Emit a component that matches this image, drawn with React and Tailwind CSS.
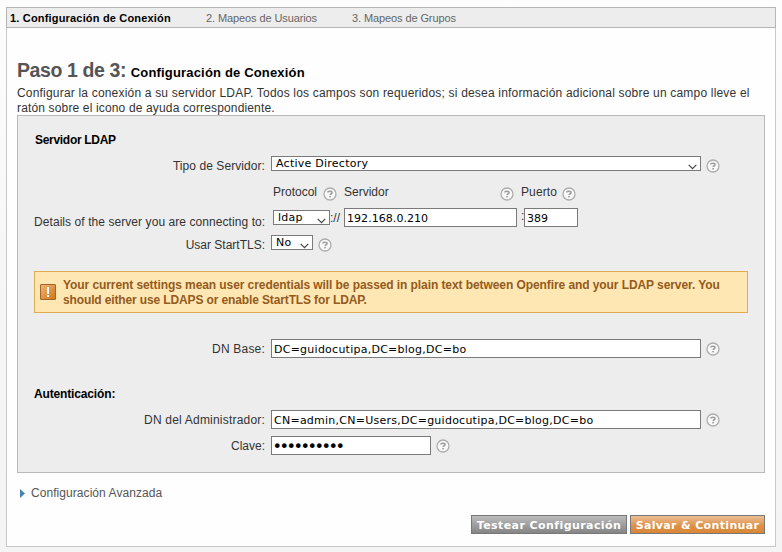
import { useState } from 'react';

const HelpIcon = ({ className = '' }) => (
  <svg className={`block size-[14px] shrink-0 ${className}`} viewBox="0 0 14 14" fill="none">
    <circle cx="7" cy="7" r="6" fill="#f8f8f8" stroke="#adadad" strokeWidth="1.3" />
    <path d="M4.8 5.6C4.8 3.7 9.1 3.7 9.1 5.6C9.1 6.8 7.1 6.7 7.1 8.1" stroke="#9c9c9c" strokeWidth="1.5" />
    <rect x="6.2" y="9" width="1.7" height="1.4" fill="#9c9c9c" />
  </svg>
);

const Label = ({ children, className = '' }) => (
  <label className={`w-[231px] shrink-0 whitespace-nowrap text-right ${className}`}>{children}</label>
);

const TextInput = ({ className = '', ...props }) => (
  <input
    className={`block h-[19px] shrink-0 border border-[#7a7a7a] bg-white pt-px font-['DejaVu_Sans',sans-serif] text-black outline-none ${className}`}
    {...props}
  />
);

const Select = ({ options, className = '', ...props }) => (
  <div className={`relative h-[15px] shrink-0 ${className}`}>
    <select
      className="block h-[15px] w-full appearance-none border border-[#7a7a7a] bg-white pl-1 font-['DejaVu_Sans',sans-serif] text-[11px] leading-[14px] tracking-[0.25px] text-black outline-none"
      {...props}
    >
      {options.map((option) => (
        <option key={option}>{option}</option>
      ))}
    </select>
    <svg className="absolute top-[8px] right-1 h-[6px] w-[9px]" viewBox="0 0 9 6" fill="none">
      <path d="M0.7 0.8L4.5 4.6L8.3 0.8" stroke="#444" strokeWidth="1.2" />
    </svg>
  </div>
);

const App = () => {
  const [form, setForm] = useState({
    serverType: 'Active Directory',
    protocol: 'ldap',
    host: '192.168.0.210',
    port: '389',
    startTls: 'No',
    baseDn: 'DC=guidocutipa,DC=blog,DC=bo',
    adminDn: 'CN=admin,CN=Users,DC=guidocutipa,DC=blog,DC=bo',
    password: '0123456789',
  });

  const handleChange = (e) => {
    const { name, value } = e.target;
    setForm((prev) => ({ ...prev, [name]: value }));
  };

  return (
    <div className="h-[552px] w-[782px] overflow-hidden bg-linear-to-b from-[#fdfdfd] via-[#f5f5f5] via-60% to-[#f4f4f4] pt-[7px] pl-[6px] font-['Liberation_Sans',Arial,sans-serif] text-[12px] leading-[15px] text-[#333]">
      <div className="h-[540px] w-[770px] border border-[#c8c8c8] bg-[#fefefe]">
        {/* Wizard steps */}
        <div className="-mx-px -mt-px flex h-[21px] items-center border border-[#b5b5b5] bg-[#ededed] pt-[2px] pl-[3px] text-[11px] text-[#666]">
          <span className="w-[196px] whitespace-nowrap font-bold tracking-[0.18px] text-black">1. Configuración de Conexión</span>
          <span className="w-[146px] whitespace-nowrap tracking-[-0.1px]">2. Mapeos de Usuarios</span>
          <span className="whitespace-nowrap tracking-[-0.1px]">3. Mapeos de Grupos</span>
        </div>

        <div className="px-[10px]">
          <h1 className="mt-[28px] h-[30px] whitespace-nowrap text-[13px] leading-[28px] font-bold tracking-[0.17px] text-black">
            <span className="mr-px text-[19.5px] tracking-[-0.4px] text-[#555]">Paso 1 de 3:</span> Configuración de Conexión
          </h1>
          <p className="h-[29px] whitespace-nowrap">
            <span className="tracking-[0.19px]">
              Configurar la conexión a su servidor LDAP. Todos los campos son requeridos; si desea información adicional sobre un campo lleve el
            </span>
            <br />
            <span className="tracking-[0.15px]">ratón sobre el icono de ayuda correspondiente.</span>
          </p>

          <div className="h-[358px] w-[748px] border border-[#b9b9b9] bg-[#ededed] pl-[16px]">
            <h2 className="mt-[17px] pl-px font-bold tracking-[-0.3px] text-black">Servidor LDAP</h2>

            <div className="mt-2 flex h-[20px]">
              <Label className="pt-[3px] tracking-[0.07px]">Tipo de Servidor:</Label>
              <Select
                name="serverType"
                value={form.serverType}
                onChange={handleChange}
                options={['Active Directory', 'OpenLDAP']}
                className="ml-[6px] w-[430px]"
              />
              <HelpIcon className="mt-[3px] ml-[5px]" />
            </div>

            <div className="mt-[9px] flex h-[16px] pl-[239px]">
              <span className="w-[50px]">Protocol</span>
              <HelpIcon className="mt-[2px]" />
              <span className="ml-[7px] w-[156px]">Servidor</span>
              <HelpIcon className="mt-[2px]" />
              <span className="ml-[7px] w-[41px] tracking-[0.1px]">Puerto</span>
              <HelpIcon className="mt-[2px]" />
            </div>

            <div className="mt-[7px] flex h-[24px]">
              <Label className="pt-[7px] tracking-[0.07px]">Details of the server you are connecting to:</Label>
              <Select
                name="protocol"
                value={form.protocol}
                onChange={handleChange}
                options={['ldap', 'ldaps']}
                className="mt-[2px] ml-[8px] w-[57px]"
              />
              <span className="mt-[3px] w-[14px]">://</span>
              <TextInput
                name="host"
                value={form.host}
                onChange={handleChange}
                className="w-[173px] px-[2px] text-[11px] tracking-[0.05px]"
              />
              <span className="mt-px w-[7px] pl-1">:</span>
              <TextInput name="port" value={form.port} onChange={handleChange} className="w-[54px] px-[2px] text-[11px]" />
            </div>

            <div className="mt-[3px] flex h-[20px]">
              <Label className="pt-[3px]">Usar StartTLS:</Label>
              <Select
                name="startTls"
                value={form.startTls}
                onChange={handleChange}
                options={['No', 'Sí']}
                className="ml-[6px] w-[42px]"
              />
              <HelpIcon className="mt-[3px] ml-[5px]" />
            </div>

            <div className="mt-4 flex h-[42px] w-[714px] items-center border border-[#dfad51] bg-[#ffe7b3] pl-[5px] font-bold text-[#945a20]">
              <svg className="mr-[7px] size-4 shrink-0" viewBox="0 0 16 16">
                <defs>
                  <linearGradient id="warn" x1="0" y1="0" x2="1" y2="1">
                    <stop offset="0" stopColor="#eeb679" />
                    <stop offset="1" stopColor="#d27414" />
                  </linearGradient>
                </defs>
                <rect x="0.5" y="0.5" width="15" height="15" rx="0.5" fill="url(#warn)" stroke="#a2662c" />
                <rect x="7" y="3" width="2" height="7" fill="#fff" />
                <rect x="7" y="11" width="2" height="2" fill="#fff" />
              </svg>
              <p className="pt-[2px] whitespace-nowrap">
                <span className="tracking-[-0.08px]">
                  Your current settings mean user credentials will be passed in plain text between Openfire and your LDAP server. You
                </span>
                <br />
                <span className="tracking-[-0.13px]">should either use LDAPS or enable StartTLS for LDAP.</span>
              </p>
            </div>

            <div className="mt-[26px] flex h-[19px]">
              <Label className="pt-[3px] tracking-[0.2px]">DN Base:</Label>
              <TextInput
                name="baseDn"
                value={form.baseDn}
                onChange={handleChange}
                className="ml-[6px] w-[430px] px-[2px] text-[11px] tracking-[0.25px]"
              />
              <HelpIcon className="mt-[3px] ml-[5px]" />
            </div>

            <h2 className="mt-[29px] font-bold tracking-[-0.15px] text-black">Autenticación:</h2>

            <div className="mt-2 flex h-[19px]">
              <Label className="pt-[3px] tracking-[0.2px]">DN del Administrador:</Label>
              <TextInput
                name="adminDn"
                value={form.adminDn}
                onChange={handleChange}
                className="ml-[6px] w-[430px] px-[2px] text-[11px] tracking-[0.25px]"
              />
              <HelpIcon className="mt-[3px] ml-[5px]" />
            </div>

            <div className="mt-[7px] flex h-[19px]">
              <Label className="pt-[3px]">Clave:</Label>
              <TextInput
                type="password"
                name="password"
                value={form.password}
                onChange={handleChange}
                className="ml-[6px] w-[160px] px-[0.5px] text-[16px] tracking-[-2.44px]"
              />
              <HelpIcon className="mt-[3px] ml-[5px]" />
            </div>
          </div>

          <div className="mt-[13px] flex items-center pl-[3px] tracking-[0.06px] text-[#555]">
            <svg className="mr-[6px] h-[9px] w-[5px]" viewBox="0 0 5 9">
              <path d="M0 0L5 4.5L0 9Z" fill="#4682b4" />
            </svg>
            Configuración Avanzada
          </div>

          <div className="mt-[14px] flex w-[748px] justify-end gap-[3px] font-['DejaVu_Sans',sans-serif] text-[11px] leading-[17px] font-bold text-white">
            <button className="h-[19px] w-[156px] border border-[#777] bg-linear-to-b from-[#bcbcbc] to-[#858585] pt-px tracking-[0.42px] whitespace-nowrap">
              Testear Configuración
            </button>
            <button className="h-[19px] w-[135px] border border-[#777] bg-linear-to-b from-[#eabf93] via-[#dd8f45] via-60% to-[#d98735] pt-px tracking-[0.35px] whitespace-nowrap">
              Salvar &amp; Continuar
            </button>
          </div>
        </div>
      </div>
    </div>
  );
};

export default App;
